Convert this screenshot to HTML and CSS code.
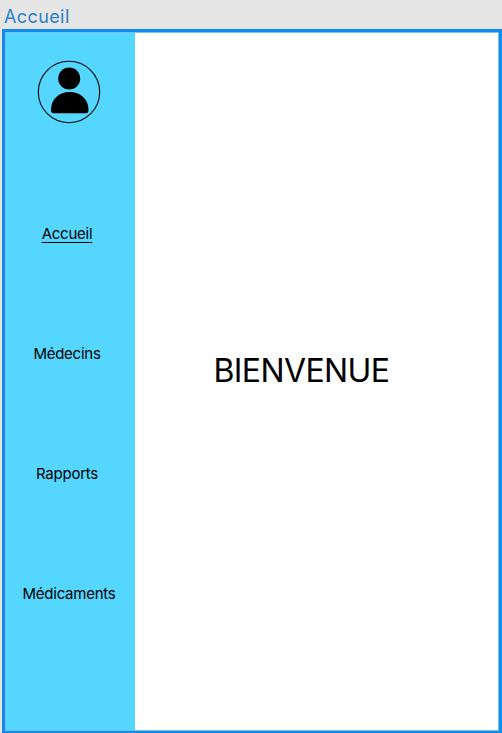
FILE: index.html
```html
<!DOCTYPE html>
<html lang="fr">
<head>
<meta charset="utf-8">
<title>Accueil</title>
<link rel="stylesheet" href="styles.css">
</head>
<body>
<div class="label">Accueil</div>
<main class="frame">
  <aside class="sidebar">
    <svg class="avatar" viewBox="0 0 64 64" aria-hidden="true">
      <circle cx="32" cy="32" r="30.7" fill="none" stroke="#000" stroke-width="1.1"/>
      <circle cx="32.200" cy="18.500" r="11"/>
      <path d="M14 50C14 39 22 32 32.700 32S51.500 39 51.500 50Q51.500 53.300 49 53.300H16.500Q14 53.300 14 50Z"/>
    </svg>
    <nav class="menu">
      <a class="item active">Accueil</a>
      <a class="item">Médecins</a>
      <a class="item">Rapports</a>
      <a class="item wide">Médicaments</a>
    </nav>
  </aside>
  <section class="content"><h1 class="title">BIENVENUE</h1></section>
</main>
</body>
</html>
```
FILE: styles.css
```css
* { box-sizing: border-box; }
body { margin: 0; height: 733px; overflow: hidden; background: #e5e5e5; font-family: Inter, sans-serif; color: #000; }
.label { height: 29px; padding: 5px 0 0 4px; font-size: 18px; line-height: 24px; letter-spacing: 0.4px; color: #2a80cd; }
.frame { display: flex; width: 500px; height: 705px; margin-left: 2px; border: 3px solid #118ceb; background: #fff; outline: 1px solid #76c0f5; outline-offset: -4px; }
.sidebar { width: 130px; background: #55d6ff; display: flex; flex-direction: column; align-items: center; padding: 28px 2px 0 0; }
.avatar { width: 64px; height: 64px; }
.menu { display: flex; flex-direction: column; align-items: center; gap: 100px; margin: 100px 4px 0 0; }
.item { font-size: 15px; line-height: 20px; letter-spacing: -0.25px; }
.wide { margin-left: 4px; }
.active { text-decoration: underline; text-decoration-thickness: 1px; text-underline-offset: 3px; }
.content { flex: 1; padding: 317px 0 0 78.500px; }
.title { margin: 0; font-size: 32px; line-height: 44px; font-weight: 400; letter-spacing: -0.6px; }
```
